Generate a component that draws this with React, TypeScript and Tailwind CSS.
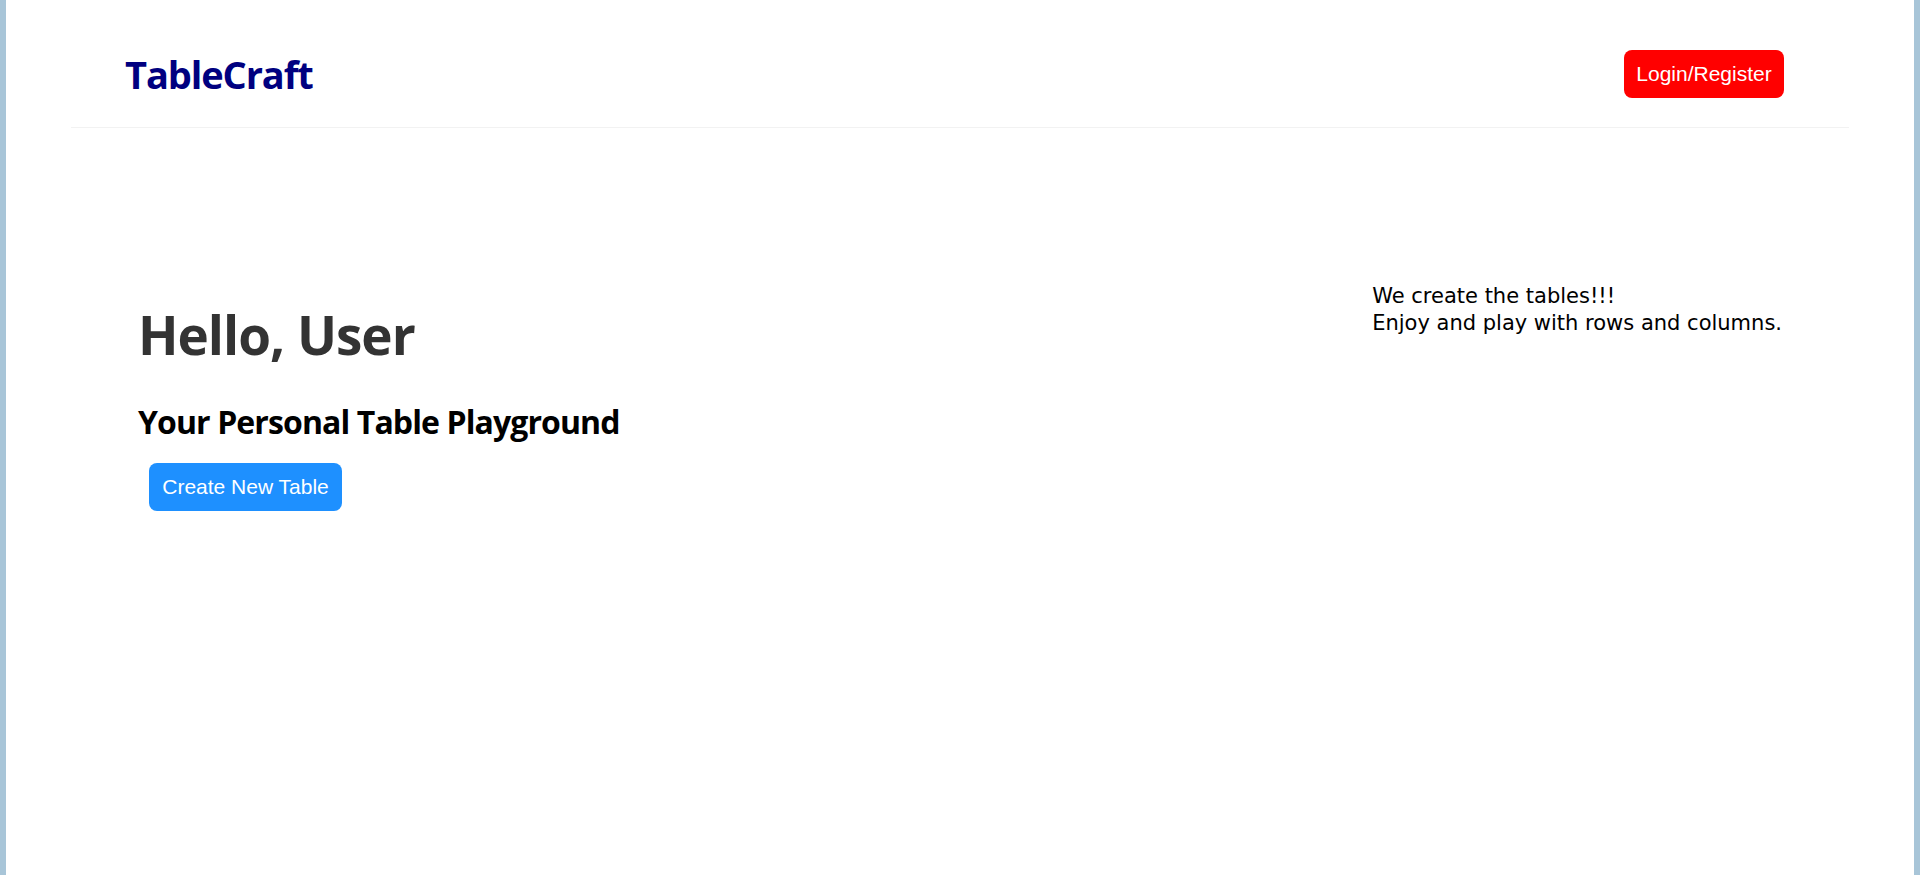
export default function App() {
  return (
    <div className="min-h-screen bg-white border-x-[6px] border-[#a8c5d8]">
      <header className="mx-[65px] flex items-center justify-between pt-[50px] pb-[29px] pl-[54px] pr-[65px] border-b border-[#f2f2f2]">
        <h2 className="font-['Open_Sans',sans-serif] font-bold text-[38px] leading-none tracking-[-1.1px] text-[#000080]">
          TableCraft
        </h2>
        <button className="w-[160px] h-[48px] rounded-[8px] bg-[#ff0000] text-white font-['Liberation_Sans',Arial,sans-serif] text-[21px]">
          Login/Register
        </button>
      </header>

      <main className="flex items-start justify-between pl-[132px] pr-[132px] pt-[155px]">
        <div className="pt-[25px]">
          <h1 className="font-['Open_Sans',sans-serif] font-bold text-[53px] leading-none tracking-[-1px] text-[#333333]">
            Hello, User
          </h1>
          <h3 className="mt-[45px] font-['Open_Sans',sans-serif] font-bold text-[32px] leading-none tracking-[-0.9px] text-black">
            Your Personal Table Playground
          </h3>
          <button className="mt-[25px] ml-[11px] w-[193px] h-[48px] rounded-[8px] bg-[#1e90ff] text-white font-['Liberation_Sans',Arial,sans-serif] text-[21px]">
            Create New Table
          </button>
        </div>
        <div className="font-['DejaVu_Sans',Verdana,sans-serif] text-[21px] leading-[27px] text-black">
          <p>We create the tables!!!</p>
          <p>Enjoy and play with rows and columns.</p>
        </div>
      </main>
    </div>
  );
}
